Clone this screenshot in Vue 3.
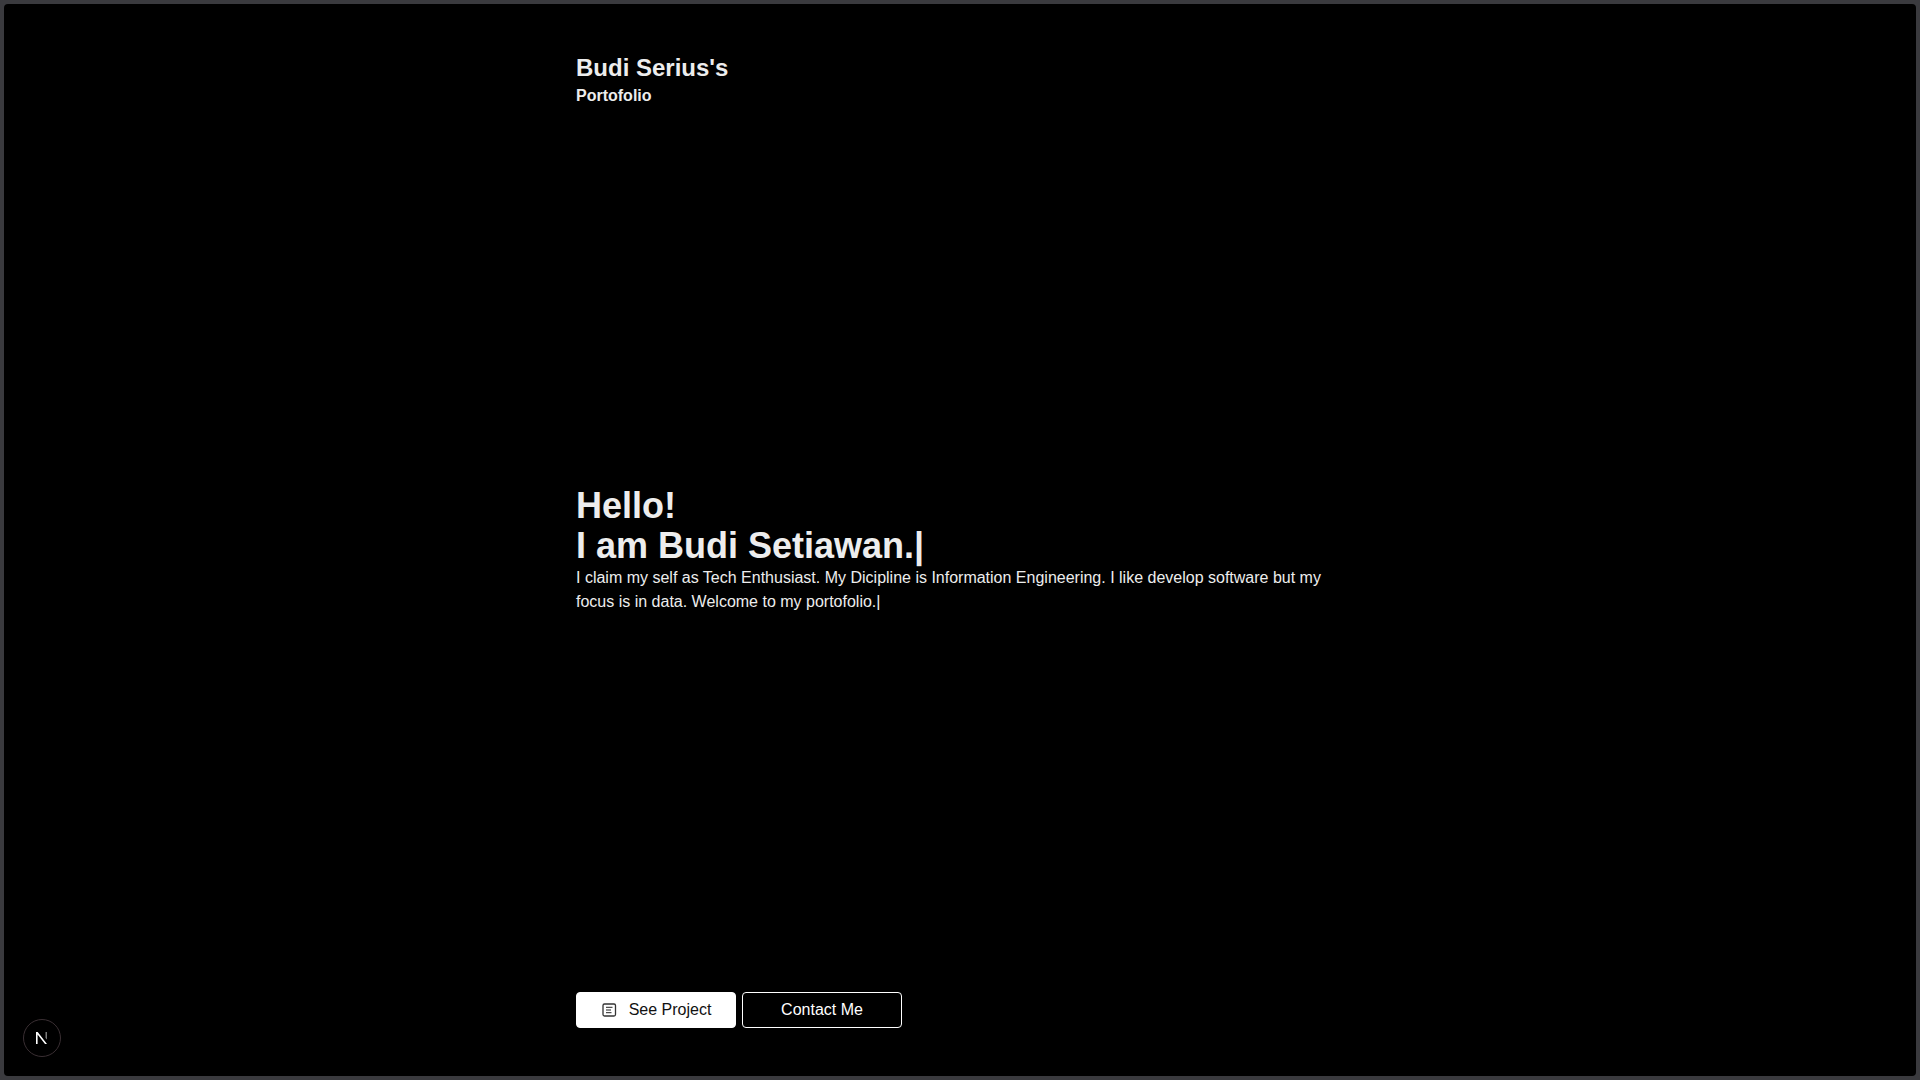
<template>
  <div class="frame">
    <div class="screen">
      <main class="page">
        <header class="head">
          <h1 class="title">Budi Serius's</h1>
          <p class="sub">Portofolio</p>
        </header>
        <section class="intro">
          <h2 class="hello">Hello!<br />I am Budi Setiawan.<span class="cursor">|</span></h2>
          <p class="lead">I claim my self as Tech Enthusiast. My Dicipline is Information Engineering. I like develop software but my focus is in data. Welcome to my portofolio.<span class="cursor-thin">|</span></p>
        </section>
        <div class="actions">
          <button class="btn primary">
            <svg class="icon" viewBox="0 0 16 16" width="16" height="16" fill="none">
              <rect x="2" y="2" width="12.5" height="12" rx="1.5" stroke="#333" stroke-width="1.3" />
              <path d="M5 5.3h6.5M5 8h5M5 10.7h5.5" stroke="#222" stroke-width="1" />
            </svg>
            See Project
          </button>
          <button class="btn outline">Contact Me</button>
        </div>
      </main>
      <div class="badge">
        <svg viewBox="0 0 18 18" width="18" height="18">
          <path d="M3 3h1.7L14 15h-2L4.6 5.6V15H3z" fill="#fff" />
          <path d="M12.6 3h1.2v7.6l-1.2-1.5z" fill="#999" />
        </svg>
      </div>
    </div>
  </div>
</template>

<script setup>
</script>

<style>
html, body { margin: 0; background: #000; }
</style>

<style scoped>
.frame {
  height: 1080px;
  box-sizing: border-box;
  padding: 4px;
  background: #3a3a3e;
}
.screen {
  position: relative;
  height: 100%;
  border-radius: 4px;
  background: #000;
  color: #ededed;
  font-family: "Liberation Sans", Arial, sans-serif;
  overflow: hidden;
}
.page {
  box-sizing: border-box;
  width: 768px;
  height: 100%;
  margin: 0 auto;
  padding: 48px 0;
  display: flex;
  flex-direction: column;
  justify-content: space-between;
}
.title { margin: 0; font-size: 24px; line-height: 32px; font-weight: 700; }
.sub { margin: 0; font-size: 16px; line-height: 24px; font-weight: 700; }
.hello { margin: 0; font-size: 36px; line-height: 40px; font-weight: 700; }
.lead { margin: 0; font-size: 16px; line-height: 24px; }
.actions { display: flex; gap: 6px; }
.btn {
  box-sizing: border-box;
  width: 160px;
  height: 36px;
  display: inline-flex;
  align-items: center;
  justify-content: center;
  gap: 12px;
  border-radius: 4px;
  font: 16px/24px "Liberation Sans", Arial, sans-serif;
  padding: 0;
  cursor: pointer;
}
.primary { background: #fff; color: #111; border: 1px solid #fff; }
.outline { background: #000; color: #fff; border: 1px solid #fff; }
.icon { flex: none; }
.badge {
  position: absolute;
  left: 19px;
  bottom: 19px;
  box-sizing: border-box;
  width: 38px;
  height: 38px;
  border-radius: 50%;
  background: #000;
  border: 1px solid #3a2f33;
  display: flex;
  align-items: center;
  justify-content: center;
}
</style>
